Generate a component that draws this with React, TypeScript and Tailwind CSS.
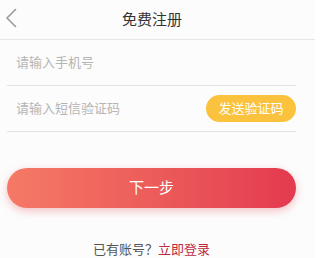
const font = { fontFamily: '"Noto Sans CJK SC", "Noto Sans", sans-serif' };

function BackIcon() {
  return (
    <svg width="12" height="20" viewBox="0 0 12 20" fill="none">
      <path d="M10.5 1.5 L2 10 L10.5 18.5" stroke="#9a9a9a" strokeWidth="1.6" strokeLinecap="round" strokeLinejoin="round" />
    </svg>
  );
}

export default function App() {
  return (
    <div className="h-[258px] w-[320px] bg-white" style={font}>
      <div className="flex h-full w-[315px] flex-col bg-[#fcfcfc]">
        <div className="relative flex h-[41px] items-center justify-center border-b border-[#e6e6e6] pr-[11px]">
          <div className="absolute left-[5px] top-[8px]">
            <BackIcon />
          </div>
          <div className="text-[15px] text-[#333]">免费注册</div>
        </div>

        <div className="flex flex-col px-[7px]">
          <div className="flex h-[46px] w-[289px] items-center border-b border-[#e3e3e3] pl-[9px] text-[13px] text-[#b5b5b5]">
            请输入手机号
          </div>
          <div className="flex h-[46px] w-[289px] items-center justify-between border-b border-[#e3e3e3] pl-[9px] text-[13px] text-[#b5b5b5]">
            <span>请输入短信验证码</span>
            <button className="flex h-[27px] w-[90px] items-center justify-center rounded-full bg-[#fbc23e] text-[13px] text-white">
              发送验证码
            </button>
          </div>

          <button className="mt-[36px] flex h-[40px] w-[289px] items-center justify-center rounded-full bg-gradient-to-r from-[#f57966] to-[#e3394f] text-[15px] text-white shadow-[0_3px_8px_rgba(230,80,90,0.35)]">
            下一步
          </button>

          <div className="mt-[31px] w-[289px] text-center text-[13px] text-[#555]">
            已有账号？<span className="text-[#c0283f]">立即登录</span>
          </div>
        </div>
      </div>
    </div>
  );
}
